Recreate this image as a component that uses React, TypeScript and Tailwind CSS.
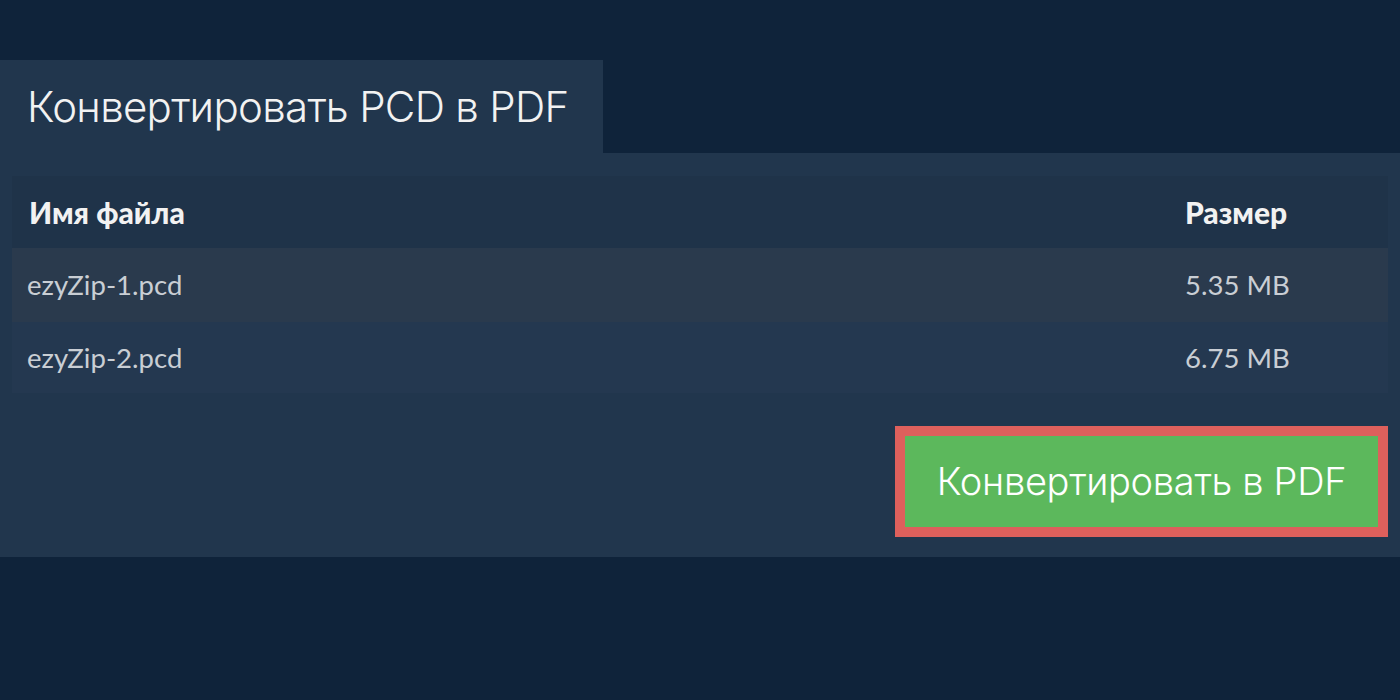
export default function App() {
  const files = [
    { name: 'ezyZip-1.pcd', size: '5.35 MB' },
    { name: 'ezyZip-2.pcd', size: '6.75 MB' },
  ];

  return (
    <div className="min-h-[700px] w-full bg-[#0f233a] pt-[60px]">
      {/* Title tab */}
      <div className="flex h-[93px] w-[603px] items-center bg-[#21364d] pl-[27px]">
        <h1 className="font-['Inter'] text-[42px] font-light leading-none tracking-[-0.7px] text-[#f2f2f2]">
          Конвертировать PCD в PDF
        </h1>
      </div>

      {/* Panel */}
      <div className="bg-[#21364d] px-3 pb-5 pt-[23px]">
        <table className="w-full border-collapse font-['Lato']">
          <thead>
            <tr className="h-[72px] bg-[#1f3349] text-left text-[30px] text-[#f2f2f2]">
              <th className="pl-[17px] font-black">Имя файла</th>
              <th className="w-[220px] pl-[17px] font-black">Размер</th>
            </tr>
          </thead>
          <tbody className="text-[27.5px] text-[#c9ced4]">
            {files.map((f, i) => (
              <tr key={f.name} className={i === 0 ? 'h-[74px] bg-[#2a3a4d]' : 'h-[71px] bg-[#243850]'}>
                <td className="pl-[15px]">{f.name}</td>
                <td className="pl-[17px]">{f.size}</td>
              </tr>
            ))}
          </tbody>
        </table>

        <div className="mt-[33px] flex justify-end">
          <button className="flex h-[111px] w-[493px] items-center justify-center border-[10px] border-[#de605c] bg-[#5cb85c] font-['Inter'] text-[38px] font-light tracking-[-0.3px] text-white">
            Конвертировать в PDF
          </button>
        </div>
      </div>
    </div>
  );
}
